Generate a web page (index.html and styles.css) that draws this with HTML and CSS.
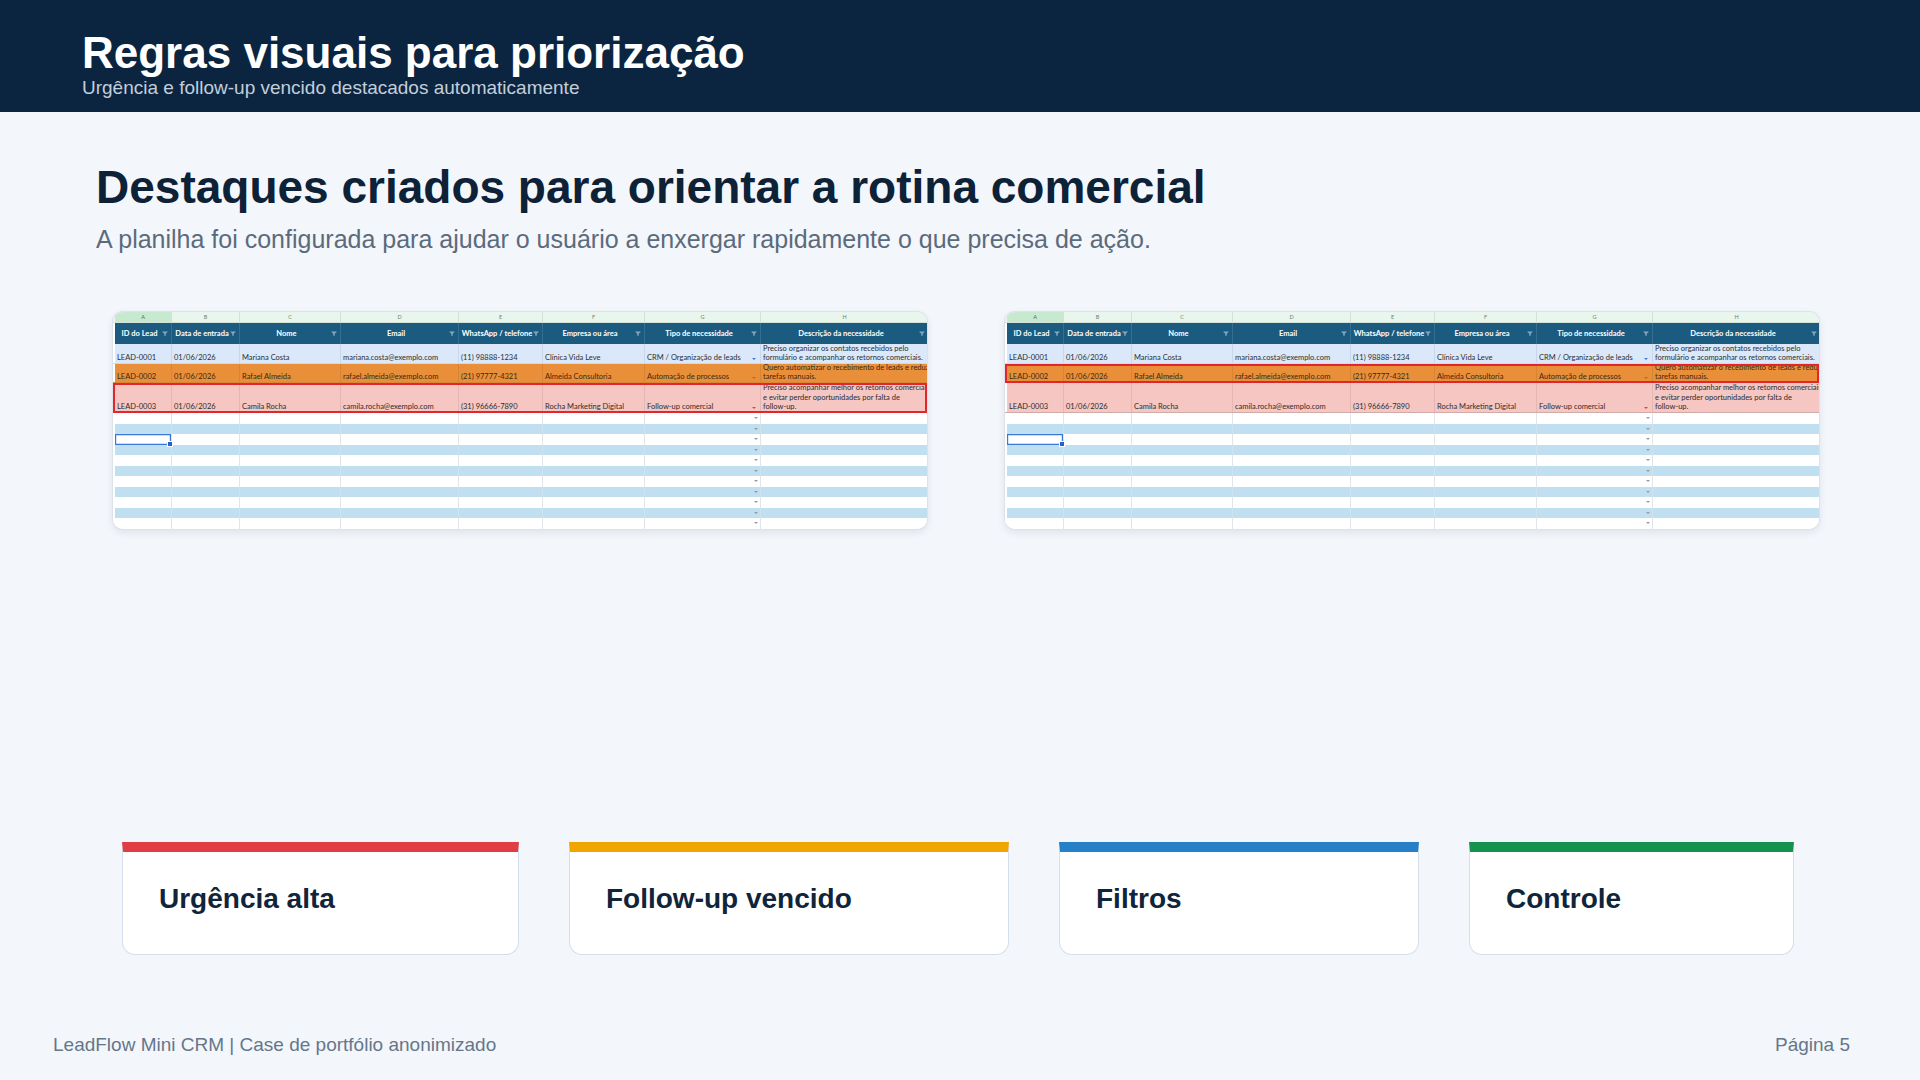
FILE: index.html
```html
<!DOCTYPE html>
<html lang="pt-BR">
<head>
<meta charset="utf-8">
<title>Regras visuais para priorização</title>
<link rel="stylesheet" href="styles.css">
</head>
<body>
<div class="slide">
  <header class="topbar">
    <h1 class="topbar-title">Regras visuais para priorização</h1>
    <p class="topbar-sub">Urgência e follow-up vencido destacados automaticamente</p>
  </header>

  <main class="content">
    <h2 class="section-title">Destaques criados para orientar a rotina comercial</h2>
    <p class="section-sub">A planilha foi configurada para ajudar o usuário a enxergar rapidamente o que precisa de ação.</p>

    <div class="shots">
      <!-- Sheet 1: urgência alta (linha 3 destacada) -->
      <div class="sheet">
        <div class="row letters"><span class="cell cur">A</span><span class="cell">B</span><span class="cell">C</span><span class="cell">D</span><span class="cell">E</span><span class="cell">F</span><span class="cell">G</span><span class="cell">H</span></div>
        <div class="row head">
          <span class="cell"><span>ID do Lead</span><svg class="filter" viewBox="0 0 6 5"><path d="M0 .4H6L3.7 2.8V4.8H2.3V2.8Z"/></svg></span>
          <span class="cell"><span>Data de entrada</span><svg class="filter" viewBox="0 0 6 5"><path d="M0 .4H6L3.7 2.8V4.8H2.3V2.8Z"/></svg></span>
          <span class="cell"><span>Nome</span><svg class="filter" viewBox="0 0 6 5"><path d="M0 .4H6L3.7 2.8V4.8H2.3V2.8Z"/></svg></span>
          <span class="cell"><span>Email</span><svg class="filter" viewBox="0 0 6 5"><path d="M0 .4H6L3.7 2.8V4.8H2.3V2.8Z"/></svg></span>
          <span class="cell"><span>WhatsApp / telefone</span><svg class="filter" viewBox="0 0 6 5"><path d="M0 .4H6L3.7 2.8V4.8H2.3V2.8Z"/></svg></span>
          <span class="cell"><span>Empresa ou área</span><svg class="filter" viewBox="0 0 6 5"><path d="M0 .4H6L3.7 2.8V4.8H2.3V2.8Z"/></svg></span>
          <span class="cell"><span>Tipo de necessidade</span><svg class="filter" viewBox="0 0 6 5"><path d="M0 .4H6L3.7 2.8V4.8H2.3V2.8Z"/></svg></span>
          <span class="cell"><span>Descrição da necessidade</span><svg class="filter" viewBox="0 0 6 5"><path d="M0 .4H6L3.7 2.8V4.8H2.3V2.8Z"/></svg></span>
        </div>
        <div class="row r1">
          <span class="cell">LEAD-0001</span><span class="cell">01/06/2026</span><span class="cell">Mariana Costa</span><span class="cell">mariana.costa@exemplo.com</span><span class="cell">(11) 98888-1234</span><span class="cell">Clínica Vida Leve</span>
          <span class="cell g"><span>CRM / Organização de leads</span><i class="dd dd-blue"></i></span>
          <span class="cell desc">Preciso organizar os contatos recebidos pelo<br>formulário e acompanhar os retornos comerciais.</span>
        </div>
        <div class="row r2">
          <span class="cell">LEAD-0002</span><span class="cell">01/06/2026</span><span class="cell">Rafael Almeida</span><span class="cell">rafael.almeida@exemplo.com</span><span class="cell">(21) 97777-4321</span><span class="cell">Almeida Consultoria</span>
          <span class="cell g"><span>Automação de processos</span><i class="dd dd-orange"></i></span>
          <span class="cell desc">Quero automatizar o recebimento de leads e reduzir<br>tarefas manuais.</span>
        </div>
        <div class="row r3 hl">
          <span class="cell">LEAD-0003</span><span class="cell">01/06/2026</span><span class="cell">Camila Rocha</span><span class="cell">camila.rocha@exemplo.com</span><span class="cell">(31) 96666-7890</span><span class="cell">Rocha Marketing Digital</span>
          <span class="cell g"><span>Follow-up comercial</span><i class="dd dd-red"></i></span>
          <span class="cell desc">Preciso acompanhar melhor os retornos comerciais<br>e evitar perder oportunidades por falta de<br>follow-up.</span>
        </div>
        <div class="row blank"><span class="cell"></span><span class="cell"></span><span class="cell"></span><span class="cell"></span><span class="cell"></span><span class="cell"></span><span class="cell g"><i class="dd"></i></span><span class="cell"></span></div>
        <div class="row blank alt"><span class="cell"></span><span class="cell"></span><span class="cell"></span><span class="cell"></span><span class="cell"></span><span class="cell"></span><span class="cell g"><i class="dd"></i></span><span class="cell"></span></div>
        <div class="row blank"><span class="cell cur-cell"></span><span class="cell"></span><span class="cell"></span><span class="cell"></span><span class="cell"></span><span class="cell"></span><span class="cell g"><i class="dd"></i></span><span class="cell"></span></div>
        <div class="row blank alt"><span class="cell"></span><span class="cell"></span><span class="cell"></span><span class="cell"></span><span class="cell"></span><span class="cell"></span><span class="cell g"><i class="dd"></i></span><span class="cell"></span></div>
        <div class="row blank"><span class="cell"></span><span class="cell"></span><span class="cell"></span><span class="cell"></span><span class="cell"></span><span class="cell"></span><span class="cell g"><i class="dd"></i></span><span class="cell"></span></div>
        <div class="row blank alt"><span class="cell"></span><span class="cell"></span><span class="cell"></span><span class="cell"></span><span class="cell"></span><span class="cell"></span><span class="cell g"><i class="dd"></i></span><span class="cell"></span></div>
        <div class="row blank"><span class="cell"></span><span class="cell"></span><span class="cell"></span><span class="cell"></span><span class="cell"></span><span class="cell"></span><span class="cell g"><i class="dd"></i></span><span class="cell"></span></div>
        <div class="row blank alt"><span class="cell"></span><span class="cell"></span><span class="cell"></span><span class="cell"></span><span class="cell"></span><span class="cell"></span><span class="cell g"><i class="dd"></i></span><span class="cell"></span></div>
        <div class="row blank"><span class="cell"></span><span class="cell"></span><span class="cell"></span><span class="cell"></span><span class="cell"></span><span class="cell"></span><span class="cell g"><i class="dd"></i></span><span class="cell"></span></div>
        <div class="row blank alt"><span class="cell"></span><span class="cell"></span><span class="cell"></span><span class="cell"></span><span class="cell"></span><span class="cell"></span><span class="cell g"><i class="dd"></i></span><span class="cell"></span></div>
        <div class="row blank"><span class="cell"></span><span class="cell"></span><span class="cell"></span><span class="cell"></span><span class="cell"></span><span class="cell"></span><span class="cell g"><i class="dd"></i></span><span class="cell"></span></div>
      </div>

      <!-- Sheet 2: follow-up vencido (linha 2 destacada) -->
      <div class="sheet">
        <div class="row letters"><span class="cell cur">A</span><span class="cell">B</span><span class="cell">C</span><span class="cell">D</span><span class="cell">E</span><span class="cell">F</span><span class="cell">G</span><span class="cell">H</span></div>
        <div class="row head">
          <span class="cell"><span>ID do Lead</span><svg class="filter" viewBox="0 0 6 5"><path d="M0 .4H6L3.7 2.8V4.8H2.3V2.8Z"/></svg></span>
          <span class="cell"><span>Data de entrada</span><svg class="filter" viewBox="0 0 6 5"><path d="M0 .4H6L3.7 2.8V4.8H2.3V2.8Z"/></svg></span>
          <span class="cell"><span>Nome</span><svg class="filter" viewBox="0 0 6 5"><path d="M0 .4H6L3.7 2.8V4.8H2.3V2.8Z"/></svg></span>
          <span class="cell"><span>Email</span><svg class="filter" viewBox="0 0 6 5"><path d="M0 .4H6L3.7 2.8V4.8H2.3V2.8Z"/></svg></span>
          <span class="cell"><span>WhatsApp / telefone</span><svg class="filter" viewBox="0 0 6 5"><path d="M0 .4H6L3.7 2.8V4.8H2.3V2.8Z"/></svg></span>
          <span class="cell"><span>Empresa ou área</span><svg class="filter" viewBox="0 0 6 5"><path d="M0 .4H6L3.7 2.8V4.8H2.3V2.8Z"/></svg></span>
          <span class="cell"><span>Tipo de necessidade</span><svg class="filter" viewBox="0 0 6 5"><path d="M0 .4H6L3.7 2.8V4.8H2.3V2.8Z"/></svg></span>
          <span class="cell"><span>Descrição da necessidade</span><svg class="filter" viewBox="0 0 6 5"><path d="M0 .4H6L3.7 2.8V4.8H2.3V2.8Z"/></svg></span>
        </div>
        <div class="row r1">
          <span class="cell">LEAD-0001</span><span class="cell">01/06/2026</span><span class="cell">Mariana Costa</span><span class="cell">mariana.costa@exemplo.com</span><span class="cell">(11) 98888-1234</span><span class="cell">Clínica Vida Leve</span>
          <span class="cell g"><span>CRM / Organização de leads</span><i class="dd dd-blue"></i></span>
          <span class="cell desc">Preciso organizar os contatos recebidos pelo<br>formulário e acompanhar os retornos comerciais.</span>
        </div>
        <div class="row r2 hl">
          <span class="cell">LEAD-0002</span><span class="cell">01/06/2026</span><span class="cell">Rafael Almeida</span><span class="cell">rafael.almeida@exemplo.com</span><span class="cell">(21) 97777-4321</span><span class="cell">Almeida Consultoria</span>
          <span class="cell g"><span>Automação de processos</span><i class="dd dd-orange"></i></span>
          <span class="cell desc">Quero automatizar o recebimento de leads e reduzir<br>tarefas manuais.</span>
        </div>
        <div class="row r3">
          <span class="cell">LEAD-0003</span><span class="cell">01/06/2026</span><span class="cell">Camila Rocha</span><span class="cell">camila.rocha@exemplo.com</span><span class="cell">(31) 96666-7890</span><span class="cell">Rocha Marketing Digital</span>
          <span class="cell g"><span>Follow-up comercial</span><i class="dd dd-red"></i></span>
          <span class="cell desc">Preciso acompanhar melhor os retornos comerciais<br>e evitar perder oportunidades por falta de<br>follow-up.</span>
        </div>
        <div class="row blank"><span class="cell"></span><span class="cell"></span><span class="cell"></span><span class="cell"></span><span class="cell"></span><span class="cell"></span><span class="cell g"><i class="dd"></i></span><span class="cell"></span></div>
        <div class="row blank alt"><span class="cell"></span><span class="cell"></span><span class="cell"></span><span class="cell"></span><span class="cell"></span><span class="cell"></span><span class="cell g"><i class="dd"></i></span><span class="cell"></span></div>
        <div class="row blank"><span class="cell cur-cell"></span><span class="cell"></span><span class="cell"></span><span class="cell"></span><span class="cell"></span><span class="cell"></span><span class="cell g"><i class="dd"></i></span><span class="cell"></span></div>
        <div class="row blank alt"><span class="cell"></span><span class="cell"></span><span class="cell"></span><span class="cell"></span><span class="cell"></span><span class="cell"></span><span class="cell g"><i class="dd"></i></span><span class="cell"></span></div>
        <div class="row blank"><span class="cell"></span><span class="cell"></span><span class="cell"></span><span class="cell"></span><span class="cell"></span><span class="cell"></span><span class="cell g"><i class="dd"></i></span><span class="cell"></span></div>
        <div class="row blank alt"><span class="cell"></span><span class="cell"></span><span class="cell"></span><span class="cell"></span><span class="cell"></span><span class="cell"></span><span class="cell g"><i class="dd"></i></span><span class="cell"></span></div>
        <div class="row blank"><span class="cell"></span><span class="cell"></span><span class="cell"></span><span class="cell"></span><span class="cell"></span><span class="cell"></span><span class="cell g"><i class="dd"></i></span><span class="cell"></span></div>
        <div class="row blank alt"><span class="cell"></span><span class="cell"></span><span class="cell"></span><span class="cell"></span><span class="cell"></span><span class="cell"></span><span class="cell g"><i class="dd"></i></span><span class="cell"></span></div>
        <div class="row blank"><span class="cell"></span><span class="cell"></span><span class="cell"></span><span class="cell"></span><span class="cell"></span><span class="cell"></span><span class="cell g"><i class="dd"></i></span><span class="cell"></span></div>
        <div class="row blank alt"><span class="cell"></span><span class="cell"></span><span class="cell"></span><span class="cell"></span><span class="cell"></span><span class="cell"></span><span class="cell g"><i class="dd"></i></span><span class="cell"></span></div>
        <div class="row blank"><span class="cell"></span><span class="cell"></span><span class="cell"></span><span class="cell"></span><span class="cell"></span><span class="cell"></span><span class="cell g"><i class="dd"></i></span><span class="cell"></span></div>
      </div>
    </div>
  </main>

  <section class="cards">
    <div class="card card-red"><h3 class="card-title">Urgência alta</h3></div>
    <div class="card card-amber"><h3 class="card-title">Follow-up vencido</h3></div>
    <div class="card card-blue"><h3 class="card-title">Filtros</h3></div>
    <div class="card card-green"><h3 class="card-title">Controle</h3></div>
  </section>

  <footer class="footer">
    <span>LeadFlow Mini CRM | Case de portfólio anonimizado</span>
    <span>Página 5</span>
  </footer>
</div>
</body>
</html>
```

FILE: styles.css
```css
* {
  box-sizing: border-box;
  margin: 0;
  padding: 0;
}

body {
  background: #f3f6fb;
  font-family: "Liberation Sans", Arial, sans-serif;
}

.slide {
  width: 1920px;
  height: 1080px;
  overflow: hidden;
  background: #f3f6fb;
}

/* ---------- top bar ---------- */
.topbar {
  height: 112px;
  background: #0b2540;
  padding: 31px 0 0 82px;
}

.topbar-title {
  font-size: 44px;
  line-height: 44px;
  font-weight: 700;
  color: #ffffff;
}

.topbar-sub {
  margin-top: 3px;
  font-size: 19px;
  line-height: 19px;
  color: #c3cedb;
}

/* ---------- content ---------- */
.content {
  padding: 52px 0 0 96px;
}

.section-title {
  font-size: 46px;
  line-height: 46px;
  font-weight: 700;
  color: #0d2137;
}

.section-sub {
  margin-top: 17px;
  font-size: 25px;
  line-height: 25px;
  color: #5b6b7c;
}

.shots {
  display: flex;
  gap: 78px;
  margin-top: 60px;
  padding-left: 17px;
}

/* ---------- spreadsheet snapshot ---------- */
.sheet {
  width: 814px;
  height: 217px;
  background: #ffffff;
  border-radius: 10px;
  overflow: hidden;
  box-shadow: 0 0 0 1px #dbe2ea, 0 3px 8px rgba(20, 40, 70, 0.10);
  font-family: Lato, "Open Sans", sans-serif;
  color: #2d2d2d;
}

.row {
  display: grid;
  grid-template-columns: 2px 57px 68px 101px 118px 84px 102px 116px 168px;
}

.row::before {
  content: "";
  background: #ffffff;
}

.cell {
  display: flex;
  align-items: flex-end;
  overflow: hidden;
  white-space: nowrap;
  padding: 0 2px 1.5px;
  font-size: 7.5px;
  line-height: 9px;
  border-right: 1px solid rgba(0, 0, 0, 0.07);
}

.letters {
  height: 11px;
  background: #e8f6ed;
  border-bottom: 1px solid #d2e2d7;
}

.letters::before {
  background: #eef1f2;
}

.letters .cell {
  justify-content: center;
  align-items: center;
  padding: 0;
  font-size: 5.5px;
  color: #737d77;
  border-right-color: #d2e2d7;
}

.letters .cur {
  background: #c7e9d0;
  color: #4c6a55;
}

.head {
  height: 21px;
  background: #1b5b7f;
  color: #ffffff;
  font-weight: 700;
}

.head .cell {
  display: grid;
  grid-template-columns: 1fr auto;
  align-items: center;
  padding: 0 3px 0 2px;
  border-right-color: rgba(255, 255, 255, 0.12);
}

.head .cell span {
  text-align: center;
  overflow: hidden;
}

.filter {
  width: 6px;
  height: 5px;
  fill: #86a9c1;
}

.r1 {
  height: 20px;
  background: #dae8fa;
  border-bottom: 1px solid rgba(0, 0, 0, 0.06);
}

.r2 {
  height: 19px;
  background: #e98f3a;
  color: #3a2912;
  border-bottom: 1px solid rgba(0, 0, 0, 0.06);
}

.r3 {
  height: 30px;
  background: #f5c6c2;
  border-bottom: 1px solid rgba(0, 0, 0, 0.14);
}

.hl {
  outline: 2px solid #e2262c;
  outline-offset: -2px;
}

.desc {
  line-height: 8.6px;
  padding-bottom: 0.5px;
}

.r3 .desc {
  line-height: 9.2px;
  padding-bottom: 1px;
}

.g span {
  flex: none;
}

.dd {
  flex: none;
  margin-left: auto;
  margin-right: 2px;
  margin-bottom: 1.5px;
  width: 0;
  height: 0;
  border-left: 2px solid transparent;
  border-right: 2px solid transparent;
  border-top: 2.5px solid #9a9a9a;
}

.dd-blue {
  border-top-color: #3b7bd9;
}

.dd-orange {
  border-top-color: #b96a26;
}

.dd-red {
  border-top-color: #e0443f;
}

.blank {
  height: 10.5px;
  background: #ffffff;
}

.blank.alt {
  background: #c0e0f1;
}

.blank .cell {
  padding: 0;
  align-items: center;
  border-right-color: #e1e5e9;
}

.blank.alt .cell {
  border-right-color: #cfe3ee;
}

.blank .dd {
  margin-bottom: 0;
}

.cur-cell {
  position: relative;
  z-index: 1;
  overflow: visible;
  box-shadow: inset 0 0 0 1.2px #3a78d8;
}

.cur-cell::after {
  content: "";
  position: absolute;
  right: -2px;
  bottom: -2px;
  width: 4px;
  height: 4px;
  background: #1d63d6;
  border: 0.6px solid #ffffff;
}

/* ---------- cards ---------- */
.cards {
  display: flex;
  gap: 50px;
  margin: 313px 0 0 122px;
}

.card {
  height: 113px;
  background: #ffffff;
  border: 1.5px solid #d4dfeb;
  border-top: 10px solid;
  border-radius: 0 0 13px 13px;
  padding: 33px 36px 0;
}

.card-red {
  width: 397px;
  border-top-color: #e03e44;
}

.card-amber {
  width: 440px;
  border-top-color: #f0a500;
}

.card-blue {
  width: 360px;
  border-top-color: #2680c8;
}

.card-green {
  width: 325px;
  border-top-color: #14924e;
}

.card-title {
  font-size: 28px;
  line-height: 28px;
  font-weight: 700;
  color: #10243a;
}

/* ---------- footer ---------- */
.footer {
  display: flex;
  justify-content: space-between;
  margin-top: 80px;
  padding: 0 70px 0 53px;
  font-size: 19px;
  line-height: 19px;
  color: #66768a;
}
```
